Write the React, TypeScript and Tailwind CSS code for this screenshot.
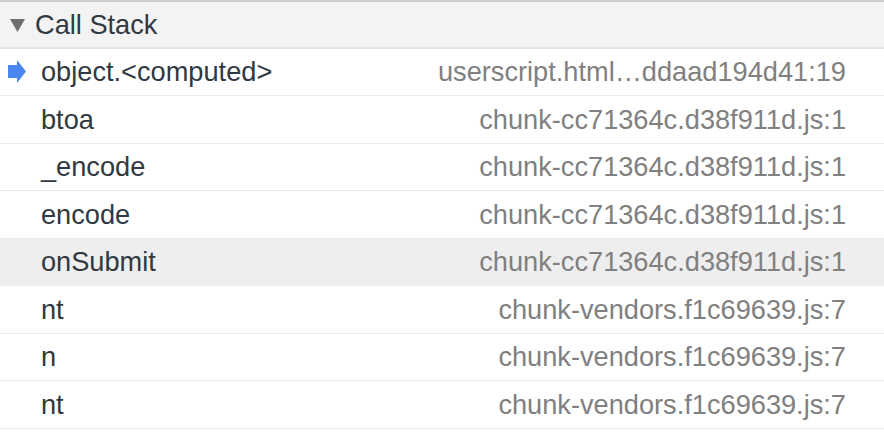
import React from 'react'

const frames = [
  { name: 'object.<computed>', loc: 'userscript.html…ddaad194d41:19', current: true },
  { name: 'btoa', loc: 'chunk-cc71364c.d38f911d.js:1' },
  { name: '_encode', loc: 'chunk-cc71364c.d38f911d.js:1' },
  { name: 'encode', loc: 'chunk-cc71364c.d38f911d.js:1' },
  { name: 'onSubmit', loc: 'chunk-cc71364c.d38f911d.js:1', hover: true },
  { name: 'nt', loc: 'chunk-vendors.f1c69639.js:7' },
  { name: 'n', loc: 'chunk-vendors.f1c69639.js:7' },
  { name: 'nt', loc: 'chunk-vendors.f1c69639.js:7' },
]

export default function App() {
  return (
    <div className="w-[884px] h-[434px] overflow-hidden bg-white font-['Liberation_Sans',Arial,sans-serif] text-[27.2px]">
      <div className="h-[48.5px] border-t-2 border-b-2 border-t-[#cfcfcf] border-b-[#e4e4e4] bg-[#f3f3f3] flex items-center">
        <svg width="34" height="44" viewBox="0 0 34 44" className="shrink-0">
          <polygon points="10,17 25,17 17.5,30" fill="#6e6e6e" />
        </svg>
        <span className="text-[#303942] leading-none ml-[1px]">Call Stack</span>
      </div>
      {frames.map((f, i) => (
        <div
          key={i}
          className={`h-[47.5px] border-b border-[#ececec] flex items-center pr-[38px] ${f.hover ? 'bg-[#eeeeee]' : ''}`}
        >
          <div className="w-[41px] shrink-0 flex items-center">
            {f.current && (
              <svg width="30" height="26" viewBox="0 0 30 26">
                <polygon points="8,6 17,6 17,1 26,12.5 17,24 17,19 8,19" fill="#4a86f0" />
              </svg>
            )}
          </div>
          <span className="text-[#303942] leading-none whitespace-nowrap">{f.name}</span>
          <span className="ml-auto text-[#808080] leading-none whitespace-nowrap">{f.loc}</span>
        </div>
      ))}
    </div>
  )
}
